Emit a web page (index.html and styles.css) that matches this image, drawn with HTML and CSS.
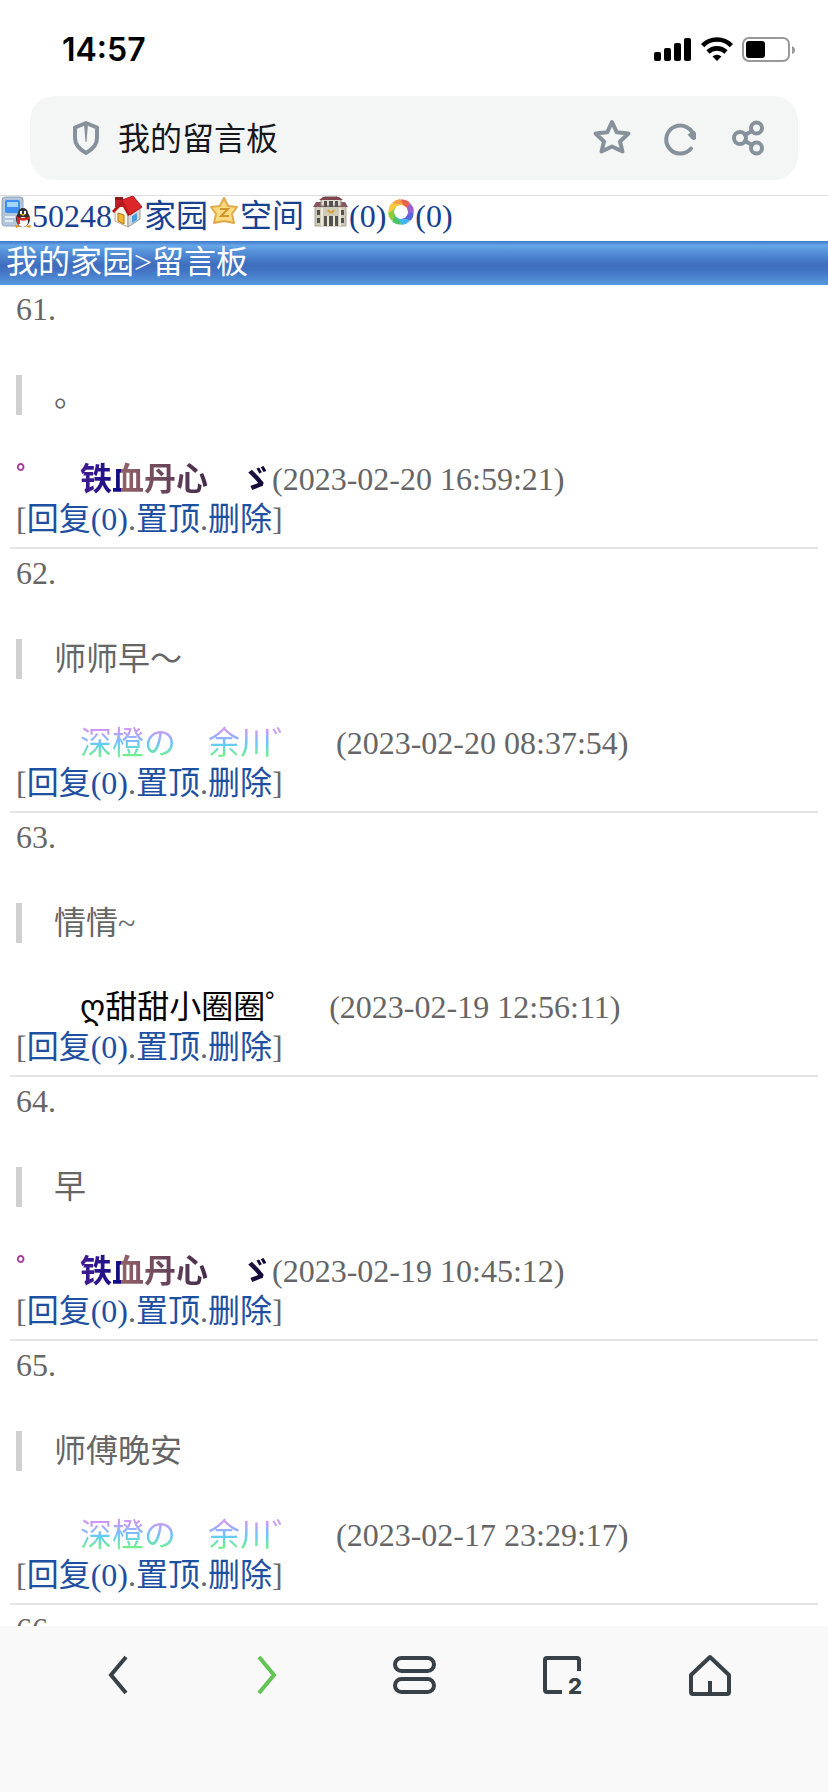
FILE: index.html
```html
<!DOCTYPE html>
<html lang="zh-CN">
<head>
<meta charset="utf-8">
<meta name="viewport" content="width=device-width, initial-scale=1">
<title>我的留言板</title>
<link rel="stylesheet" href="styles.css">
</head>
<body>
<div class="status">
  <time class="clock">14:57</time>
  <svg class="status-icons" width="142" height="26" viewBox="0 0 142 26" aria-hidden="true">
    <rect x="0" y="15" width="7" height="9" rx="2"/><rect x="10" y="11" width="7" height="13" rx="2"/><rect x="20" y="6" width="7" height="18" rx="2"/><rect x="30" y="1" width="7" height="23" rx="2"/>
    <g fill="none" stroke="#000" stroke-width="4.6"><path d="M48.600 8.600a20 20 0 0 1 28.800 0"/><path d="M54 15a13 13 0 0 1 18 0"/></g>
    <path d="M63 24l-4.500-4.500a6.500 6.500 0 0 1 9 0z"/>
    <rect x="89" y="1" width="46" height="23" rx="6" fill="none" stroke="#999" stroke-width="2"/>
    <rect x="92" y="4" width="19" height="17" rx="3"/>
    <path d="M138 9q3 1 3 4t-3 4z" fill="#999"/>
  </svg>
</div>
<header class="address">
  <svg class="tool" viewBox="0 0 40 40" aria-hidden="true"><path d="M20 5L31 9.500V20q0 9-11 15Q9 29 9 20V9.500z" fill="none" stroke="#87919b" stroke-width="4" stroke-linejoin="round"/><path d="M18 6h4l-1.500 18h-1z" fill="#87919b"/></svg>
  <h1 class="title">我的留言板</h1>
  <button class="tool" aria-label="收藏"><svg viewBox="0 0 40 40"><path d="M20 4L24.800 14.300 36.500 15.500 28 23.500 30.500 33.500 20 28.500 9.500 33.500 12 23.500 3.500 15.500 15.200 14.300z"/></svg></button>
  <button class="tool" aria-label="刷新"><svg viewBox="0 0 40 40"><path d="M31 30.500A14 14 0 1 1 34 19"/><path class="solid" d="M27.500 16.500L34 12.500 36 15V21q-2.500 2-4.500 0z"/></svg></button>
  <button class="tool" aria-label="分享"><svg viewBox="0 0 40 40"><circle cx="12" cy="20" r="6"/><circle cx="28.500" cy="10" r="5.500"/><circle cx="28.500" cy="30" r="5.500"/><path d="M17 17l7-4M17 23l7 4"/></svg></button>
</header>
<main class="page">
  <nav class="links">
    <a href="#"><svg class="pic" viewBox="0 0 32 32" aria-hidden="true"><rect x="2" y="1" width="21" height="29" rx="3" fill="#b3c6d9" stroke="#8ba6c2"/><rect x="5" y="4" width="15" height="13" rx="2" fill="#3f8ff2"/><path d="M7 6h11v5H7z" fill="#a5d5ff"/><path d="M5 21h10M5 25h8" stroke="#e4edf6" stroke-width="2"/><ellipse cx="23" cy="23" rx="7" ry="8" fill="#292929"/><circle cx="23" cy="17" r="5" fill="#333"/><path d="M20 15h2v3h-2zM24 15h2v3h-2z" fill="#fff"/><ellipse cx="23" cy="26" rx="5" ry="5" fill="#fff"/><path d="M16 20q7 4 14 0v3q-7 3-10 1v4h-3v-5z" fill="#d92723"/><path d="M20 18h6l-3 2z" fill="#f0a51d"/><path d="M15 29l6 1-5 2zM31 29l-6 1 5 2z" fill="#ec921b"/></svg>50248</a><a href="#"><svg class="pic" viewBox="0 0 32 32" aria-hidden="true"><path d="M3 14L11 6 16 19V31L3 25z" fill="#fbf6ea" stroke="#b7a894"/><path d="M16 31V19l12-7v11z" fill="#d4d8dc" stroke="#999"/><path d="M3 1h8v10H3z" fill="#c32025"/><path d="M3 1h8v3H3z" fill="#8f191d"/><path d="M10 4L21 0 30 11 18 19z" fill="#dc2629" stroke="#a8181c"/><path d="M0 15L10 4l8 15-2 1-6-11-8 8z" fill="#b9181c"/><path d="M6 17l6 2v9l-6-3z" fill="#f3b836" stroke="#b37516"/><path d="M20 20l5-3v7l-5 3z" fill="#48a0e0"/></svg>家园</a><a href="#"><svg class="pic" viewBox="0 0 32 32" aria-hidden="true"><path d="M16 2l4 8 9 1-5 7 2 9-10-2-10 2 2-9-5-7 9-1z" fill="#fadb80" stroke="#e0a94c" stroke-width="2" stroke-linejoin="round"/><path d="M12 13h8l-7 7h8" fill="none" stroke="#cf9530" stroke-width="2"/></svg>空间</a>
    <a href="#"><svg class="pic pic-wide" viewBox="0 0 37 32" aria-hidden="true"><path d="M3 10h31v20H3z" fill="#cfc9b8" stroke="#aaa391"/><path d="M1 11l3-5h29l3 5z" fill="#8a5562"/><path d="M9 10V4l5-4h10l5 4v6z" fill="#ded9ca" stroke="#8d8378"/><path d="M7 4l4-3h16l4 3z" fill="#824451"/><path d="M12 5h3v6h-3zM17 5h4v6h-4zM23 5h3v6h-3zM12 20h14v10H12zM5 14h3v5H5zM29 14h3v5h-3zM5 22h3v5H5zM29 22h3v5h-3z" fill="#555254"/><path d="M10 12v18M16 20v10M22 20v10M28 12v18" stroke="#eee8d7" stroke-width="2"/><path d="M16 14q3 5 6 0" fill="none" stroke="#d5a338" stroke-width="2"/></svg>(0)</a><a href="#"><svg class="pic pic-slim" viewBox="0 0 29 32" aria-hidden="true"><defs><path id="blade" d="M-9-9A13 13 0 0 1-1-13L7-4 1-7-6-7z"/></defs><g transform="translate(15 16)"><use href="#blade" fill="#f5a044"/><use href="#blade" fill="#e85f4f" transform="rotate(45)"/><use href="#blade" fill="#9c62cc" transform="rotate(90)"/><use href="#blade" fill="#5468e0" transform="rotate(135)"/><use href="#blade" fill="#45b6f5" transform="rotate(180)"/><use href="#blade" fill="#4cc36a" transform="rotate(225)"/><use href="#blade" fill="#8ccc35" transform="rotate(270)"/><use href="#blade" fill="#f8cb3b" transform="rotate(315)"/></g></svg>(0)</a>
  </nav>
  <div class="crumbs"><a href="#">我的家园</a>&gt;留言板</div>

  <article class="post">
    <div>61.</div>
    <blockquote>。</blockquote>
    <div class="by"><span class="name name-iron">゜　铁血丹心　ゞ</span>(2023-02-20 16:59:21)</div>
    <div>[<a href="#">回复(0)</a>.<a href="#">置顶</a>.<a href="#">删除</a>]</div>
  </article>
  <article class="post">
    <div>62.</div>
    <blockquote>师师早～</blockquote>
    <div class="by"><span class="name name-sky">　　深橙の　余川゛　</span>(2023-02-20 08:37:54)</div>
    <div>[<a href="#">回复(0)</a>.<a href="#">置顶</a>.<a href="#">删除</a>]</div>
  </article>
  <article class="post">
    <div>63.</div>
    <blockquote>情情~</blockquote>
    <div class="by"><span class="name name-ink">　　ღ甜甜小圈圈゜　</span>(2023-02-19 12:56:11)</div>
    <div>[<a href="#">回复(0)</a>.<a href="#">置顶</a>.<a href="#">删除</a>]</div>
  </article>
  <article class="post">
    <div>64.</div>
    <blockquote>早</blockquote>
    <div class="by"><span class="name name-iron">゜　铁血丹心　ゞ</span>(2023-02-19 10:45:12)</div>
    <div>[<a href="#">回复(0)</a>.<a href="#">置顶</a>.<a href="#">删除</a>]</div>
  </article>
  <article class="post">
    <div>65.</div>
    <blockquote>师傅晚安</blockquote>
    <div class="by"><span class="name name-sky">　　深橙の　余川゛　</span>(2023-02-17 23:29:17)</div>
    <div>[<a href="#">回复(0)</a>.<a href="#">置顶</a>.<a href="#">删除</a>]</div>
  </article>
  <article class="post">
    <div>66.</div>
  </article>
</main>
<nav class="toolbar">
  <button aria-label="后退"><svg viewBox="0 0 48 48"><path d="M32 6L17 24l15 18"/></svg></button>
  <button class="go" aria-label="前进"><svg viewBox="0 0 48 48"><path d="M17 6l15 18-15 18"/></svg></button>
  <button aria-label="菜单"><svg viewBox="0 0 48 48"><rect x="5" y="7" width="39" height="13" rx="6.500"/><rect x="5" y="28" width="39" height="13" rx="6.500"/></svg></button>
  <button aria-label="窗口"><svg viewBox="0 0 48 48"><path d="M41 20V9q0-2-2-2H9Q7 7 7 9v30q0 2 2 2h15"/><text x="30" y="43">2</text></svg></button>
  <button aria-label="主页"><svg viewBox="0 0 48 48"><path d="M24 6L5 24v17q0 2 2 2h34q2 0 2-2V24zM24 30v13" stroke-linejoin="round"/></svg></button>
</nav>
</body>
</html>
```
FILE: styles.css
```css
* { box-sizing: border-box; }
body {
  margin: 0;
  height: 100vh;
  display: flex;
  flex-direction: column;
  overflow: hidden;
  background: #fff;
  color: #666;
  font: 32px/40px "Liberation Serif", "Noto Sans CJK SC", "DejaVu Sans", serif;
}
a { color: #1e50a2; text-decoration: none; }
button { padding: 0; border: 0; background: none; }
svg { display: block; }

.status {
  flex: none;
  height: 96px;
  padding: 4px 32px 0 62px;
  display: flex;
  align-items: center;
  justify-content: space-between;
  color: #000;
}
.clock { font-family: Inter, sans-serif; font-weight: 600; }

.address {
  flex: none;
  height: 84px;
  margin: 0 30px 15px;
  padding: 0 30px 0 36px;
  display: flex;
  align-items: center;
  gap: 28px;
  border-radius: 24px;
  background: #f4f6f6;
}
.title {
  flex: 1;
  margin: 0 0 0 -16px;
  padding-bottom: 4px;
  color: #17181c;
  font: 32px/40px "Noto Sans CJK SC", sans-serif;
}
.tool { flex: none; width: 40px; height: 40px; }
.tool path, .tool circle { stroke-linejoin: round; stroke-linecap: round; }
button.tool svg { fill: none; stroke: #87919b; stroke-width: 4; }
button.tool .solid { fill: #87919b; stroke: none; }

.page {
  flex: 1;
  min-height: 0;
  overflow: hidden;
  border-top: 1px solid #dcdcdc;
}
.links { height: 45px; white-space: nowrap; }
.links a { color: #17418f; }
.pic { display: inline-block; width: 32px; height: 32px; vertical-align: -1px; }
.pic-wide { width: 37px; }
.pic-slim { width: 29px; }
.crumbs {
  height: 44px;
  padding: 1px 6px 3px;
  background: linear-gradient(#3f76c8, #66a5e8 10%, #5590d8 25%, #3f6dbd 55%, #4374c4 68%, #5598dc);
  color: #fff;
}
.crumbs a { color: #fff; }

.post {
  margin: 0 10px;
  padding: 4px 6px 8px;
  border-bottom: 2px solid #e3e3e9;
}
blockquote {
  margin: 46px 0 44px;
  padding-left: 32px;
  border-left: 6px solid #d0d0d0;
}
.by { white-space: nowrap; }
.name-iron {
  font-weight: 700;
  color: transparent;
  background: linear-gradient(90deg, #b43a9b 0, #a0359c 4%, #451d92 25%, #0e0a84 41%, #93626a 41%, #0a0034);
  -webkit-background-clip: text;
  background-clip: text;
}
.name-sky {
  color: transparent;
  background: linear-gradient(#cf97f6 15%, #66c8ff 52%, #74f08c 85%);
  -webkit-background-clip: text;
  background-clip: text;
}
.name-ink { color: #000; }

.toolbar {
  flex: none;
  height: 166px;
  padding: 25px 44px 0;
  display: grid;
  grid-template-columns: repeat(5, 1fr);
  align-items: start;
  justify-items: center;
  background: #f9f9f9;
}
.toolbar button { width: 48px; height: 48px; color: #384148; }
.toolbar .go { color: #61c554; }
.toolbar svg { fill: none; stroke: currentColor; stroke-width: 4; overflow: visible; }
.toolbar text { fill: currentColor; stroke: none; font: 800 22px Inter, sans-serif; }
```
